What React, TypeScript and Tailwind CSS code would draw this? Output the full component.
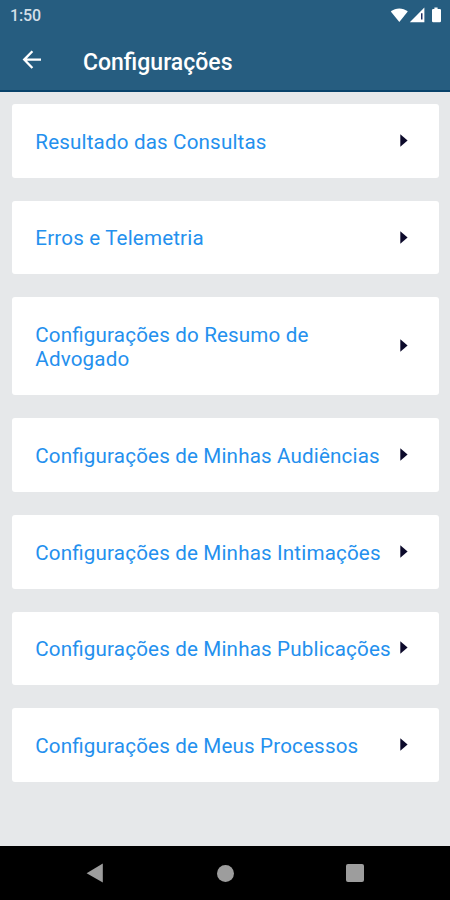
interface SettingItem {
  id: string
  label: string
}

const settings: SettingItem[] = [
  { id: 'consultas', label: 'Resultado das Consultas' },
  { id: 'telemetria', label: 'Erros e Telemetria' },
  { id: 'resumo', label: 'Configurações do Resumo de Advogado' },
  { id: 'audiencias', label: 'Configurações de Minhas Audiências' },
  { id: 'intimacoes', label: 'Configurações de Minhas Intimações' },
  { id: 'publicacoes', label: 'Configurações de Minhas Publicações' },
  { id: 'processos', label: 'Configurações de Meus Processos' },
]

function StatusBar() {
  return (
    <div className="flex h-[30px] items-center justify-between pl-[10px] pr-[7px]">
      <span className="pt-px text-[16px] font-medium leading-none tracking-[-0.1px] text-[#d3dfe7]">1:50</span>
      <svg width="53" height="17" viewBox="0 0 53 17" fill="#fff">
        <path d="M0.8 4.6C5.8 0.3 12.8 0.3 17.8 4.6L9.3 15Z" />
        <path d="M34.4 0.6v14.6H19.8Z" />
        <path d="M31 6.2h1.5v6.4H31z" fill="#1c2f63" />
        <path d="M44.4 0.6h3.2v1.3h2.2q1.2 0 1.2 1.2v11q0 1.2-1.2 1.2h-6.6q-1.2 0-1.2-1.2V3.1q0-1.2 1.2-1.2h1.2z" />
      </svg>
    </div>
  )
}

function Header() {
  return (
    <header className="h-[92px] shrink-0 border-b-2 border-[#08426a] bg-[#265d80]">
      <StatusBar />
      <div className="flex h-[60px] items-center pl-[22px]">
        <svg width="20" height="20" viewBox="0 0 20 20" fill="none" stroke="#fff" strokeWidth="2.3">
          <path d="M19 9.6H2.2M10.4 1.2L2.2 9.6L10.4 18" />
        </svg>
        <h1 className="ml-[41px] pt-[4px] text-[23px] font-medium leading-none text-white">Configurações</h1>
      </div>
    </header>
  )
}

function SettingCard({ item }: { item: SettingItem }) {
  return (
    <button className="flex items-center rounded-[3px] bg-white pb-[23.85px] pl-[23.3px] pr-[31.4px] pt-[25.85px] text-left">
      <span className="mr-[-20px] w-[360px] text-[20.6px] leading-[24.2px] tracking-[0.16px] text-[#2490ee] [font-feature-settings:'liga']">
        {item.label}
      </span>
      <svg className="mb-[3px] ml-auto" width="8" height="13" viewBox="0 0 8 13" fill="#0c0a2b">
        <path d="M0.3 0.2L7.6 6.5L0.3 12.8Z" />
      </svg>
    </button>
  )
}

function NavigationBar() {
  return (
    <nav className="flex h-[54px] shrink-0 items-center bg-black pl-[86px]">
      <svg width="18" height="20" viewBox="0 0 18 20" fill="#9d9d9d">
        <path d="M16.8 0.6V19.4L0.6 10.2Z" />
      </svg>
      <div className="ml-[113px] size-[17px] rounded-full bg-[#9d9d9d]" />
      <div className="ml-[112px] size-[18px] rounded-[2px] bg-[#9d9d9d]" />
    </nav>
  )
}

export default function App() {
  return (
    <div className="flex h-[900px] w-[450px] flex-col overflow-hidden bg-[#e6e8ea] font-[Roboto,sans-serif]">
      <Header />
      <main className="flex flex-1 flex-col gap-[22.8px] pl-[12px] pr-[10.6px] pt-[11.9px]">
        {settings.map((item) => (
          <SettingCard key={item.id} item={item} />
        ))}
      </main>
      <NavigationBar />
    </div>
  )
}
